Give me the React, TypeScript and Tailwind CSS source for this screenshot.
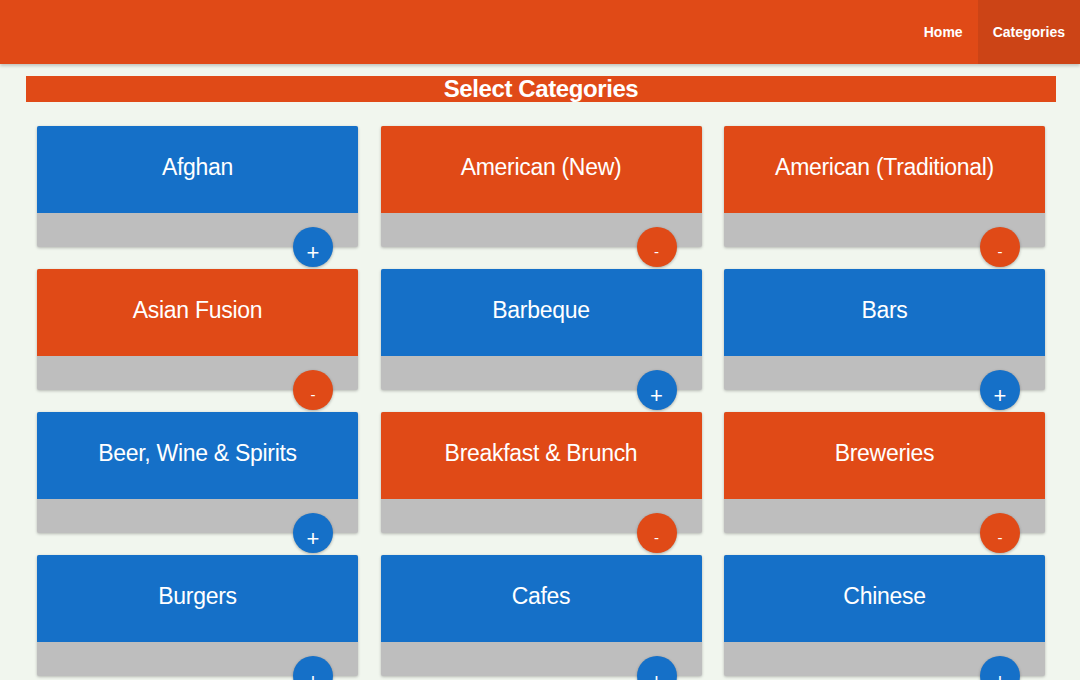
import { useState } from 'react'

const initial: [string, boolean][] = [
  ['Afghan', false],
  ['American (New)', true],
  ['American (Traditional)', true],
  ['Asian Fusion', true],
  ['Barbeque', false],
  ['Bars', false],
  ['Beer, Wine & Spirits', false],
  ['Breakfast & Brunch', true],
  ['Breweries', true],
  ['Burgers', false],
  ['Cafes', false],
  ['Chinese', false],
]

function CategoryCard({ name, selected, onToggle }: { name: string; selected: boolean; onToggle: () => void }) {
  return (
    <div className="relative h-[121px] rounded-[2px] bg-[#bebebe] shadow-[0_1px_3px_rgba(0,0,0,0.25)]">
      <div
        className={`flex h-[87px] items-center justify-center rounded-t-[2px] pb-[5px] text-[23px] tracking-[-0.3px] text-white ${
          selected ? 'bg-[#e04a17]' : 'bg-[#1570c8]'
        }`}
      >
        {name}
      </div>
      <button
        onClick={onToggle}
        className={`absolute right-[25px] bottom-[-20px] flex h-[40px] w-[40px] items-center justify-center rounded-full pt-[11px] text-white shadow-[0_1px_3px_rgba(0,0,0,0.3)] ${
          selected ? 'bg-[#e04a17] text-[15px]' : 'bg-[#1570c8] text-[22px] font-light'
        }`}
      >
        {selected ? '-' : '+'}
      </button>
    </div>
  )
}

export default function App() {
  const [cats, setCats] = useState(initial)
  const toggle = (i: number) => setCats((c) => c.map((x, j) => (j === i ? [x[0], !x[1]] : x)))

  return (
    <div className="min-h-[680px] bg-[#f1f6ee] font-['Liberation_Sans',Arial,sans-serif]">
      <header className="flex h-[64px] items-stretch justify-end bg-[#e04a17] shadow-[0_2px_3px_rgba(0,0,0,0.2)]">
        <a className="flex items-center px-[15px] text-[14px] font-bold text-white">Home</a>
        <a className="flex items-center bg-[#cc4416] px-[15px] text-[14px] font-bold text-white">Categories</a>
      </header>
      <main className="mr-[24px] ml-[26px] pt-[12px]">
        <h1 className="flex h-[26px] items-center justify-center bg-[#e04a17] text-[24px] leading-none font-bold tracking-[-0.4px] text-white">
          Select Categories
        </h1>
        <div className="grid grid-cols-3 gap-x-[22.5px] gap-y-[22px] px-[11px] pt-[24px] pb-[40px]">
          {cats.map(([name, sel], i) => (
            <CategoryCard key={name} name={name} selected={sel} onToggle={() => toggle(i)} />
          ))}
        </div>
      </main>
    </div>
  )
}
